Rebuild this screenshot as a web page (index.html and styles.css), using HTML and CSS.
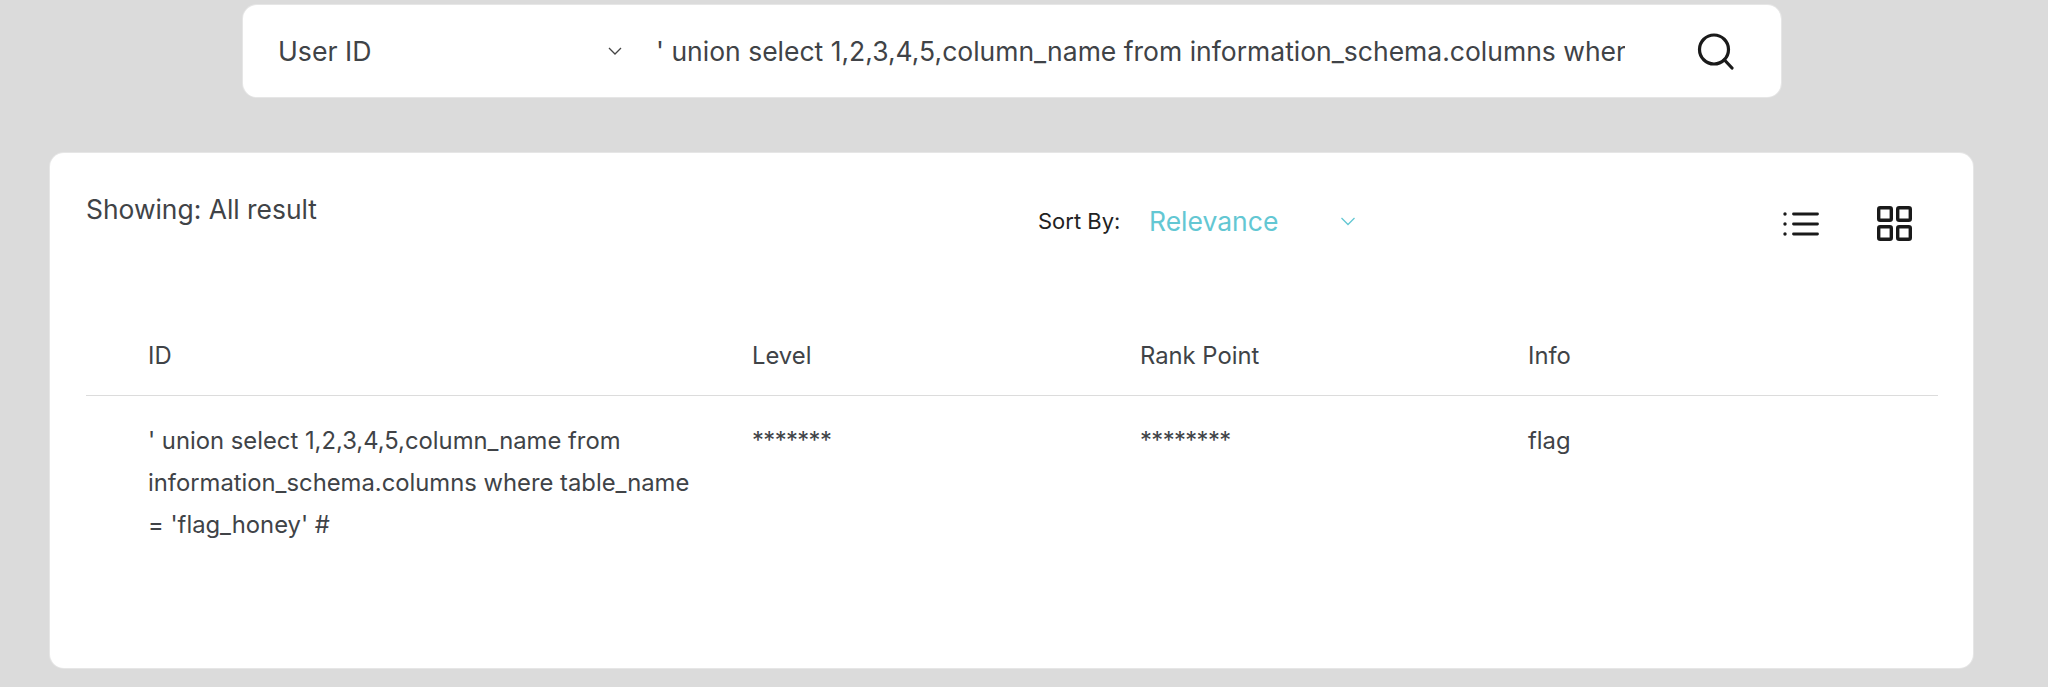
FILE: index.html
```html
<!DOCTYPE html>
<html lang="en">
<head>
<meta charset="utf-8">
<title>Search</title>
<link rel="stylesheet" href="styles.css">
</head>
<body>
<main class="page">
  <section class="search">
    <div class="field">
      <span>User ID</span>
      <svg class="chev" width="16" height="10" viewBox="0 0 16 10"><path d="M2 2l6 6 6-6" fill="none" stroke="#444" stroke-width="1.3"/></svg>
    </div>
    <div class="query">' union select 1,2,3,4,5,column_name from information_schema.columns where table_name = 'flag_honey' #</div>
    <svg class="mag" width="38" height="38" viewBox="0 0 38 38"><circle cx="17" cy="17.5" r="14.5" fill="none" stroke="#1a1a1a" stroke-width="3.2"/><path d="M27.5 28l7.5 8" fill="none" stroke="#1a1a1a" stroke-width="3.2" stroke-linecap="round"/></svg>
  </section>
  <section class="card">
    <header class="tools">
      <div class="showing">Showing: All result</div>
      <div class="sort">
        <span class="sort-label">Sort By:</span>
        <span class="sort-value">Relevance</span>
        <svg width="16" height="10" viewBox="0 0 16 10"><path d="M1.5 2l6.5 6.5L14.5 2" fill="none" stroke="#63c7d3" stroke-width="1.3"/></svg>
      </div>
      <div class="views">
        <svg width="36" height="26" viewBox="0 0 36 26"><g fill="#1a1a1a"><circle cx="2" cy="3" r="1.7"/><circle cx="2" cy="13" r="1.7"/><circle cx="2" cy="23" r="1.7"/></g><path d="M10.5 3h24M10.5 13h24M10.5 23h24" stroke="#1a1a1a" stroke-width="2.8" stroke-linecap="round"/></svg>
        <svg width="36" height="36" viewBox="0 0 36 36"><g fill="none" stroke="#1a1a1a" stroke-width="3.4"><rect x="1.7" y="1.7" width="12.6" height="12.6" rx="1.5"/><rect x="20.7" y="1.7" width="12.6" height="12.6" rx="1.5"/><rect x="1.7" y="20.7" width="12.6" height="12.6" rx="1.5"/><rect x="20.7" y="20.7" width="12.6" height="12.6" rx="1.5"/></g></svg>
      </div>
    </header>
    <div class="table">
      <div class="row head">
        <div>ID</div><div>Level</div><div>Rank Point</div><div>Info</div>
      </div>
      <div class="row body">
        <div class="wrap">' union select 1,2,3,4,5,column_name from information_schema.columns where table_name = 'flag_honey' #</div>
        <div class="stars">*******</div><div class="stars">********</div><div>flag</div>
      </div>
    </div>
  </section>
</main>
</body>
</html>
```
FILE: styles.css
```css
* { box-sizing: border-box; }
html, body { margin: 0; height: 100%; }
body {
  background: #dbdbdb;
  color: #404347;
  font-family: Inter, "Liberation Sans", sans-serif;
  overflow: hidden;
}
.page {
  display: flex;
  flex-direction: column;
  align-items: flex-start;
  padding: 5px 0 0 50px;
}
.search {
  display: flex;
  align-items: center;
  width: 1538px;
  height: 92px;
  margin-left: 193px;
  padding: 0 0 0 35px;
  background: #fff;
  border-radius: 14px;
  box-shadow: 0 0 0 1px #e6e6e6;
  font-size: 26.5px;
}
.field {
  display: flex;
  align-items: center;
  justify-content: space-between;
  width: 345px;
  flex: none;
  font-size: 26.7px;
}
.query {
  width: 969px;
  margin-left: 33px;
  flex: none;
  overflow: hidden;
  white-space: nowrap;
}
.mag { margin-left: 72px; flex: none; }
.card {
  width: 1923px;
  height: 515px;
  margin-top: 56px;
  padding: 0 35px 0 36px;
  background: #fff;
  border-radius: 14px;
  box-shadow: 0 0 0 1px #e6e6e6;
}
.tools {
  display: flex;
  align-items: flex-start;
  height: 186px;
}
.showing { width: 952px; padding-top: 40px; font-size: 26.4px; }
.sort {
  display: flex;
  align-items: center;
  width: 727px;
  padding-top: 52px;
}
.sort-label { width: 111px; font-size: 22px; color: #222; }
.sort-value { width: 191px; font-size: 26.5px; color: #63c7d3; }
.views {
  display: flex;
  align-items: center;
  gap: 58px;
  padding-top: 53px;
  margin-left: 18px;
}
.row {
  display: grid;
  grid-template-columns: 604px 388px 388px 1fr;
  padding-left: 62px;
  font-size: 23.8px;
}
.head { height: 57px; padding-top: 2px; border-bottom: 1px solid #dcdcdc; }
.body { padding-top: 24px; line-height: 42px; }
.wrap { width: 555px; }
.stars { letter-spacing: -0.6px; }
```
